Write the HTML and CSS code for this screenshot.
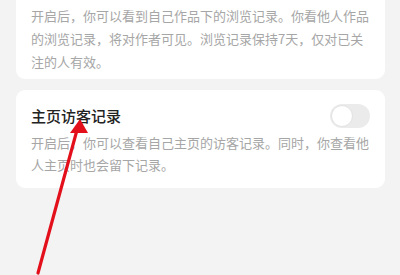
FILE: index.html
```html
<!DOCTYPE html>
<html lang="zh-CN">
<head>
<meta charset="utf-8">
<link rel="stylesheet" href="styles.css">
</head>
<body>
<div class="page">
  <section class="card card-first">
    <p class="desc">开启后，你可以看到自己作品下的浏览记录。你看他人作品的浏览记录，将对作者可见。浏览记录保持7天，仅对已关注的人有效。</p>
  </section>
  <section class="card">
    <div class="row">
      <h2 class="title">主页访客记录</h2>
      <span class="switch"><span class="knob"></span></span>
    </div>
    <p class="desc">开启后，你可以查看自己主页的访客记录。同时，你查看他人主页时也会留下记录。</p>
  </section>
</div>
<svg class="arrow" width="400" height="275" viewBox="0 0 400 275">
  <line x1="38" y1="273" x2="77" y2="130" stroke="#e3101c" stroke-width="3.2" stroke-linecap="round"/>
  <polygon points="80,119 70,133 88,133" fill="#e3101c"/>
</svg>
</body>
</html>
```
FILE: styles.css
```css
html, body {
  margin: 0;
  padding: 0;
  background: #f3f3f3;
  width: 400px;
  height: 275px;
  overflow: hidden;
}
body {
  position: relative;
  font-family: "Noto Sans CJK SC", "Noto Sans", sans-serif;
}
.page {
  display: flex;
  flex-direction: column;
  gap: 11px;
  padding: 0 15px 0 16px;
}
.card {
  background: #ffffff;
  border-radius: 9px;
  padding: 14px 15px 12px;
}
.card-first {
  margin-top: -20px;
  padding-top: 24px;
  padding-bottom: 6px;
}
.card-first .desc {
  line-height: 23px;
}
.desc {
  margin: 0;
  font-size: 13px;
  line-height: 22px;
  color: #a6a6a6;
}
.row {
  display: flex;
  align-items: center;
  justify-content: space-between;
  margin-bottom: 4px;
}
.title {
  margin: 0;
  font-size: 15px;
  line-height: 22px;
  font-weight: 500;
  color: #222222;
}
.switch {
  position: relative;
  width: 40px;
  height: 24px;
  border-radius: 12px;
  background: #ebebeb;
}
.knob {
  position: absolute;
  left: 1px;
  top: 1px;
  width: 20px;
  height: 20px;
  border-radius: 50%;
  background: #ffffff;
  border: 1px solid #e2e2e2;
}
.arrow {
  position: absolute;
  left: 0;
  top: 0;
  pointer-events: none;
}
```
